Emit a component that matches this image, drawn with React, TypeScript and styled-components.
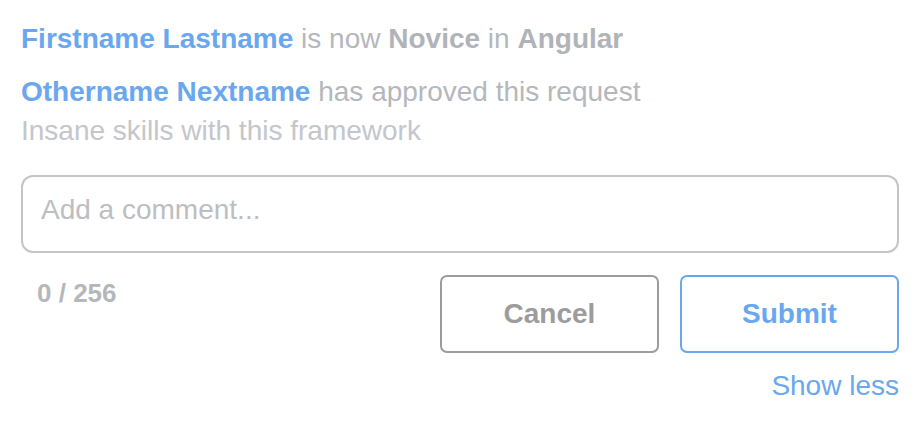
import React from "react";
import styled, { createGlobalStyle } from "styled-components";

const Global = createGlobalStyle`
  html, body { margin: 0; padding: 0; background: #ffffff; }
  body { font-family: "Liberation Sans", Arial, Helvetica, sans-serif; }
`;

const Wrap = styled.div`
  padding: 21px 21px 0 21px;
  font-family: "Liberation Sans", Arial, Helvetica, sans-serif;
`;

const Line = styled.div<{ $gap?: number; $light?: boolean }>`
  font-size: 28px;
  line-height: 36px;
  margin-top: ${(p) => p.$gap ?? 0}px;
  color: ${(p) => (p.$light ? "#c3c6cb" : "#b4b7bc")};
  white-space: nowrap;
`;

const Name = styled.span`
  color: #69a7ef;
  font-weight: 700;
`;

const Strong = styled.span`
  color: #b0b3b8;
  font-weight: 700;
`;

const Comment = styled.textarea`
  display: block;
  box-sizing: border-box;
  width: 100%;
  height: 78px;
  margin-top: 26px;
  padding: 18px 18px;
  border: 2px solid #c3c5c8;
  border-radius: 12px;
  font-family: "Liberation Sans", Arial, Helvetica, sans-serif;
  font-size: 28px;
  line-height: 30px;
  color: #555;
  resize: none;
  outline: none;
  &::placeholder {
    color: #bcbec2;
  }
`;

const Footer = styled.div`
  display: flex;
  align-items: flex-start;
  justify-content: space-between;
  margin-top: 22px;
`;

const Counter = styled.div`
  padding-left: 16px;
  font-size: 26px;
  line-height: 36px;
  font-weight: 700;
  color: #b4b7bc;
`;

const Buttons = styled.div`
  display: flex;
  gap: 21px;
`;

const Button = styled.button<{ $primary?: boolean }>`
  box-sizing: border-box;
  width: 219px;
  height: 78px;
  border: 2px solid ${(p) => (p.$primary ? "#69a7ef" : "#9c9c9c")};
  border-radius: 7px;
  background: #fff;
  color: ${(p) => (p.$primary ? "#69a7ef" : "#9c9c9c")};
  font-family: "Liberation Sans", Arial, Helvetica, sans-serif;
  font-size: 28px;
  font-weight: 700;
  cursor: pointer;
`;

const ShowLess = styled.div`
  margin-top: 15px;
  text-align: right;
  font-size: 28px;
  line-height: 36px;
  color: #69a7ef;
  cursor: pointer;
`;

export default function App() {
  return (
    <>
      <Global />
      <Wrap>
        <Line>
          <Name>Firstname Lastname</Name> is now <Strong>Novice</Strong> in{" "}
          <Strong>Angular</Strong>
        </Line>
        <Line $gap={17}>
          <Name>Othername Nextname</Name> has approved this request
        </Line>
        <Line $gap={3} $light>
          Insane skills with this framework
        </Line>
        <Comment placeholder="Add a comment..." />
        <Footer>
          <Counter>0 / 256</Counter>
          <Buttons>
            <Button>Cancel</Button>
            <Button $primary>Submit</Button>
          </Buttons>
        </Footer>
        <ShowLess>Show less</ShowLess>
      </Wrap>
    </>
  );
}
